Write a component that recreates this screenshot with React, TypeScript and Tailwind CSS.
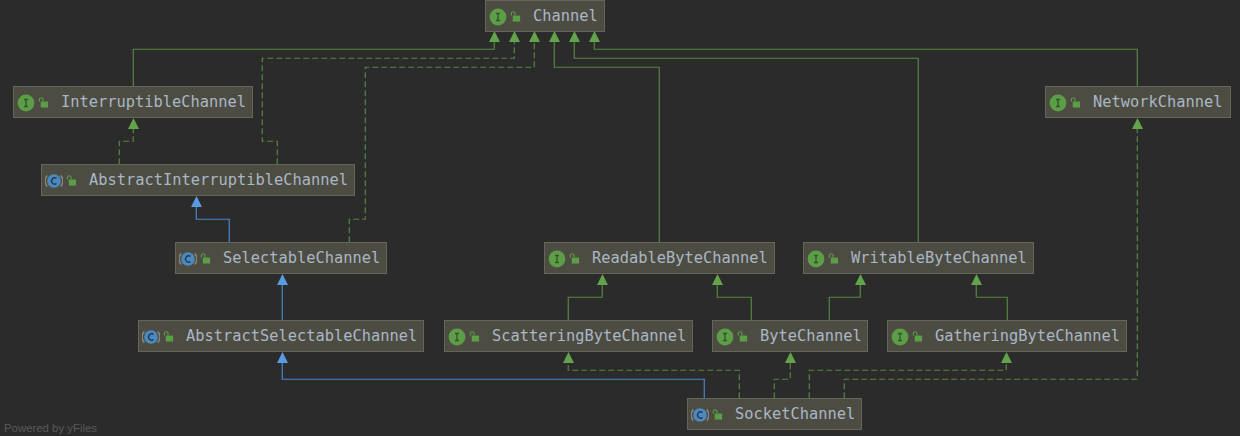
import React from 'react';

interface DiagramNode {
  name: string;
  kind: 'interface' | 'abstract';
  x: number;
  y: number;
  w: number;
}

interface Edge {
  points: string;
  tip: [number, number];
  style: 'extends' | 'implements' | 'classExtends';
}

const nodes: DiagramNode[] = [
  { name: 'Channel', kind: 'interface', x: 485, y: 0, w: 120 },
  { name: 'InterruptibleChannel', kind: 'interface', x: 13, y: 86, w: 240 },
  { name: 'NetworkChannel', kind: 'interface', x: 1045, y: 86, w: 186 },
  { name: 'AbstractInterruptibleChannel', kind: 'abstract', x: 41, y: 164, w: 314 },
  { name: 'SelectableChannel', kind: 'abstract', x: 175, y: 242, w: 212 },
  { name: 'ReadableByteChannel', kind: 'interface', x: 544, y: 242, w: 231 },
  { name: 'WritableByteChannel', kind: 'interface', x: 803, y: 242, w: 231 },
  { name: 'AbstractSelectableChannel', kind: 'abstract', x: 138, y: 320, w: 286 },
  { name: 'ScatteringByteChannel', kind: 'interface', x: 444, y: 320, w: 249 },
  { name: 'ByteChannel', kind: 'interface', x: 712, y: 320, w: 156 },
  { name: 'GatheringByteChannel', kind: 'interface', x: 887, y: 320, w: 240 },
  { name: 'SocketChannel', kind: 'abstract', x: 687, y: 398, w: 175 },
];

const edges: Edge[] = [
  { points: '133,86 133,49 494,49 494,40', tip: [494, 31], style: 'extends' },
  { points: '277,164 277,141 262,141 262,58 514,58 514,40', tip: [514, 31], style: 'implements' },
  { points: '349,242 349,219 365,219 365,67 534,67 534,40', tip: [534, 31], style: 'implements' },
  { points: '659,242 659,67 554,67 554,40', tip: [554, 31], style: 'extends' },
  { points: '918,242 918,58 574,58 574,40', tip: [574, 31], style: 'extends' },
  { points: '1137,86 1137,49 594,49 594,40', tip: [594, 31], style: 'extends' },
  { points: '119,164 119,141 133,141 133,128', tip: [133, 118], style: 'implements' },
  { points: '229,242 229,219 196,219 196,206', tip: [196, 196], style: 'classExtends' },
  { points: '282,320 282,284', tip: [282, 274], style: 'classExtends' },
  { points: '704,398 704,379 282,379 282,362', tip: [282, 352], style: 'classExtends' },
  { points: '568,320 568,297 602,297 602,284', tip: [602, 274], style: 'extends' },
  { points: '751,320 751,297 717,297 717,284', tip: [717, 274], style: 'extends' },
  { points: '829,320 829,297 860,297 860,284', tip: [860, 274], style: 'extends' },
  { points: '1007,320 1007,297 976,297 976,284', tip: [976, 274], style: 'extends' },
  { points: '739,398 739,370 568,370 568,362', tip: [568, 352], style: 'implements' },
  { points: '774,398 774,379 790,379 790,362', tip: [790, 352], style: 'implements' },
  { points: '809,398 809,370 1006,370 1006,362', tip: [1006, 352], style: 'implements' },
  { points: '844,398 844,379 1137,379 1137,128', tip: [1137, 118], style: 'implements' },
];

const KindIcon = ({ kind }: { kind: DiagramNode['kind'] }) => (
  <svg width="18" height="18" viewBox="0 0 18 18" className="shrink-0">
    {kind === 'interface' ? (
      <>
        <circle cx="9" cy="9" r="8.4" fill="#5c9e47" />
        <path d="M7 5.5h4M7 12.5h4M9 5.5v7" stroke="#34552b" strokeWidth="1.3" fill="none" />
      </>
    ) : (
      <>
        <path d="M2.2 3.5a9 9 0 0 0 0 11" stroke="#8a8a80" strokeWidth="1.5" fill="none" />
        <path d="M15.8 3.5a9 9 0 0 1 0 11" stroke="#8a8a80" strokeWidth="1.5" fill="none" />
        <circle cx="9" cy="9" r="6.8" fill="#4a8ac0" />
        <path d="M11.5 6.3a3.2 3.2 0 1 0 0 5.4" stroke="#22384e" strokeWidth="1.4" fill="none" />
      </>
    )}
  </svg>
);

const LockIcon = () => (
  <svg width="11" height="11" viewBox="0 0 12 12" className="shrink-0">
    <path d="M1.5 5V2.8a2 2 0 0 1 4 0V5" stroke="#5c9e47" strokeWidth="1.2" fill="none" />
    <rect x="3" y="5" width="8" height="6.5" fill="#5c9e47" />
  </svg>
);

const App: React.FC = () => {
  return (
    <div className="relative w-[1240px] h-[436px] overflow-hidden bg-[#2b2b2b]">
      <svg width="1240" height="436" className="absolute left-0 top-0">
        {edges.map((edge) => {
          const color = edge.style === 'classExtends' ? '#4a86c8' : '#578543';
          const tipColor = edge.style === 'classExtends' ? '#5a9ae0' : '#62a34c';
          const [tx, ty] = edge.tip;
          return (
            <g key={edge.points}>
              <polyline
                points={edge.points}
                fill="none"
                stroke={color}
                strokeWidth="1.2"
                strokeDasharray={edge.style === 'implements' ? '6 3' : undefined}
                transform="translate(0.25 0.25)"
              />
              <polygon points={`${tx + 0.5},${ty} ${tx + 6},${ty + 11} ${tx - 5},${ty + 11}`} fill={tipColor} />
            </g>
          );
        })}
      </svg>

      {nodes.map((node) => (
        <div
          key={node.name}
          className="absolute h-[32px] flex items-center pl-[3px] pt-[1px] border border-[#66655a] bg-[#4d4c42]"
          style={{ left: node.x, top: node.y, width: node.w }}
        >
          <KindIcon kind={node.kind} />
          <span className="ml-[3px] mr-[8px]">
            <LockIcon />
          </span>
          <span className="font-['DejaVu_Sans_Mono',monospace] text-[15.36px] leading-none text-[#a9b7c6] ml-[4px] pt-[1px]">
            {node.name}
          </span>
        </div>
      ))}

      <div className="absolute left-[4px] bottom-[0px] font-['Liberation_Sans',sans-serif] text-[11.4px] leading-[16px] text-[#595959]">
        Powered by yFiles
      </div>
    </div>
  );
};

export default App;
